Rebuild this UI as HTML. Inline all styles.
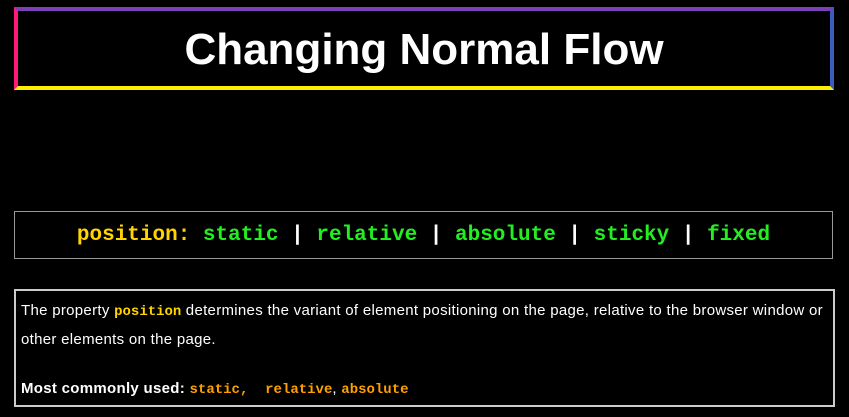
<!DOCTYPE html>
<html><head><style>
body{margin:0;background:#000;width:849px;height:417px;overflow:hidden;font-family:"Liberation Sans",sans-serif;position:relative}
.h{position:absolute;left:14px;top:7px;width:812px;height:75px;border-style:solid;border-width:4px;border-color:#7b3fb8 #3a5bc0 #ffee00 #ff1a7a;color:#fff;font-size:44px;font-weight:bold;text-align:center;line-height:77px}
.p{position:absolute;left:14px;top:211px;width:817px;height:46px;border:1px solid #999;text-align:center;line-height:48px;font-family:"Liberation Mono",monospace;font-weight:bold;font-size:21px;color:#fff}
.y{color:#ffd400}.g{color:#22ee22}
.d{position:absolute;left:14px;top:289px;border:2px solid #ccc;color:#fff;font-size:15px;letter-spacing:0.3px;line-height:27px;box-sizing:content-box}
.d p{margin:0}
.m{font-family:"Liberation Mono",monospace;font-weight:bold;color:#ffa000;font-size:14px;letter-spacing:0}
</style></head><body>
<div class="h">Changing Normal Flow</div>
<div class="p"><span class="y">position:</span> <span class="g">static</span> | <span class="g">relative</span> | <span class="g">absolute</span> | <span class="g">sticky</span> | <span class="g">fixed</span></div>
<div class="d" style="width:807px;padding:6px 5px 0;height:108px"><p>The property <span class="m" style="color:#ffd400">position</span> determines the variant of element positioning on the page, relative to the browser window or other elements on the page.</p><p style="margin-top:22px"><b>Most commonly used:</b> <span class="m">static, &nbsp;relative</span>, <span class="m">absolute</span></p></div>
</body></html>
